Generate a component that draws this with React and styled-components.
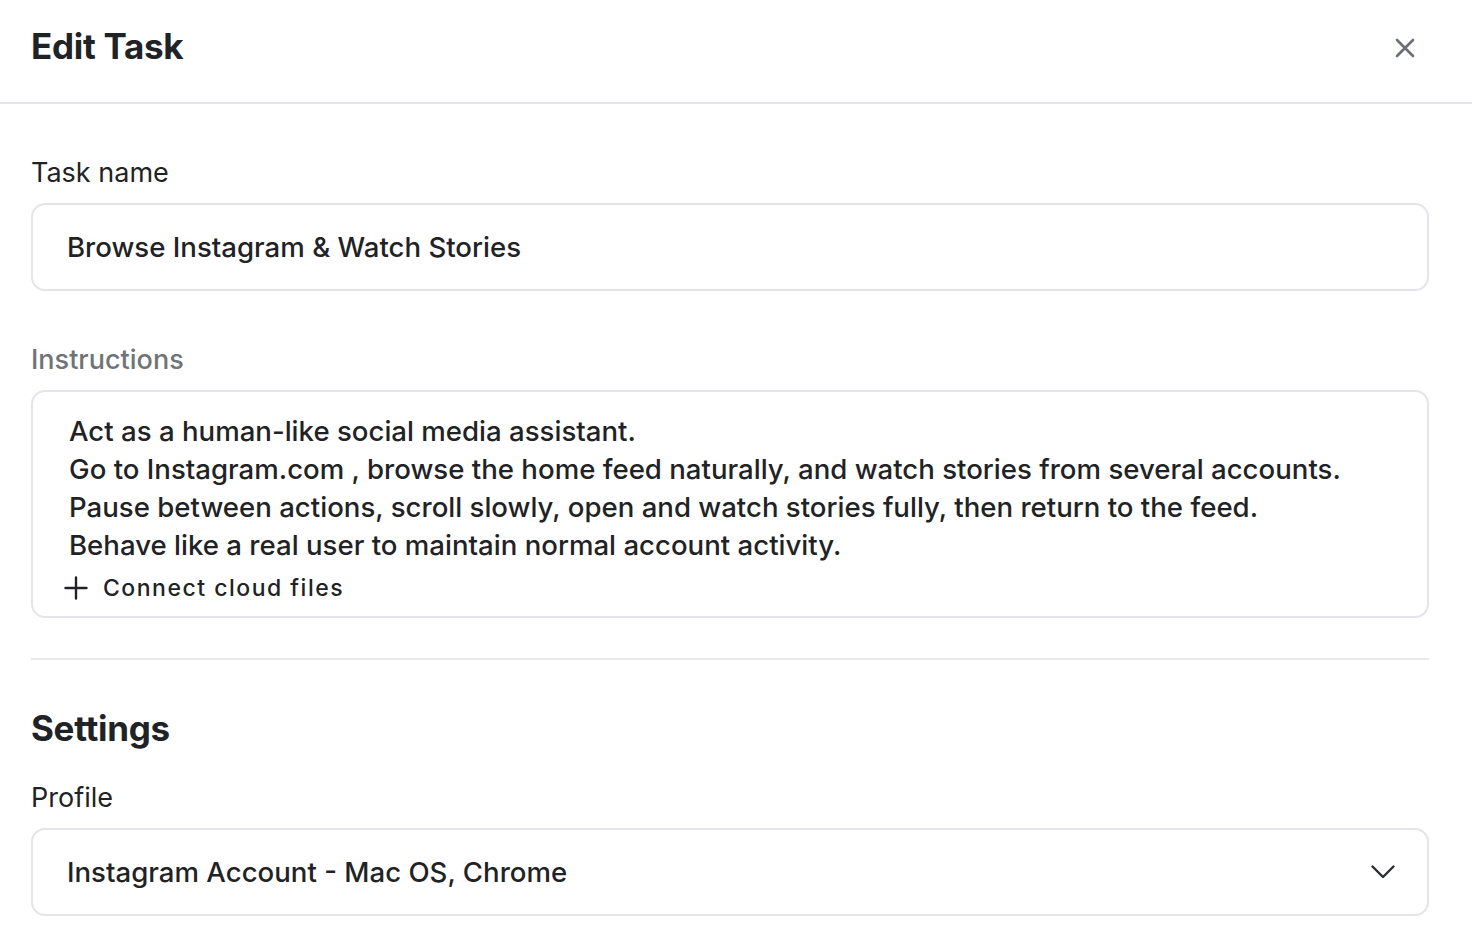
import React from "react";
import styled, { createGlobalStyle } from "styled-components";

const GlobalStyle = createGlobalStyle`
  html, body {
    margin: 0;
    padding: 0;
    background: #ffffff;
    font-family: Inter, "Noto Sans", "Liberation Sans", sans-serif;
    color: #1f2326;
  }
  * { box-sizing: border-box; }
`;

const Header = styled.div`
  height: 104px;
  border-bottom: 2px solid #e4e4ea;
  display: flex;
  align-items: center;
  justify-content: space-between;
  padding: 0 56px 10px 31px;
`;

const Title = styled.h1`
  margin: 0;
  font-size: 35px;
  font-weight: 700;
  letter-spacing: -0.3px;
  color: #1f2326;
`;

const CloseButton = styled.button`
  border: none;
  background: none;
  padding: 0;
  width: 22px;
  height: 22px;
  display: flex;
  align-items: center;
  justify-content: center;
  color: #6b6f75;
  cursor: pointer;
  margin-top: 4px;
`;

const Body = styled.div`
  padding: 53px 43px 0 31px;
`;

const Field = styled.div`
  display: flex;
  flex-direction: column;
  gap: 14px;
  margin-bottom: ${(p) => p.$mb || 0}px;
`;

const Label = styled.label`
  font-size: 27px;
  font-weight: ${(p) => (p.$muted ? 500 : 400)};
  color: ${(p) => (p.$muted ? "#6f7479" : "#1f2326")};
  line-height: 32px;
`;

const Box = styled.div`
  border: 2px solid #e4e4ea;
  border-radius: 14px;
  background: #fff;
`;

const InputBox = styled(Box)`
  height: 88px;
  display: flex;
  align-items: center;
  justify-content: space-between;
  padding: 0 32px 0 34px;
  font-size: 27.6px;
  font-weight: 500;
  color: #1f2326;
`;

const TextArea = styled(Box)`
  padding: 20px 30px 14px 36px;
  font-size: 27.6px;
  font-weight: 500;
  line-height: 38px;
`;

const Line = styled.div`
  white-space: nowrap;
`;

const ConnectButton = styled.button`
  border: none;
  background: none;
  padding: 0;
  margin: 10px 0 0 -5px;
  display: flex;
  align-items: center;
  gap: 15px;
  font-family: inherit;
  font-size: 23px;
  font-weight: 500;
  letter-spacing: 1.5px;
  color: #1f2326;
  cursor: pointer;
`;

const Divider = styled.hr`
  border: none;
  border-top: 2px solid #e9e9ee;
  margin: 40px 0 48px;
`;

const SectionTitle = styled.h2`
  margin: 0 0 34px;
  font-size: 35px;
  font-weight: 700;
  letter-spacing: -0.3px;
  color: #1f2326;
  line-height: 40px;
`;

const CloseIcon = () => (
  <svg width="20" height="20" viewBox="0 0 20 20" fill="none">
    <path d="M2 2L18 18M18 2L2 18" stroke="currentColor" strokeWidth="2.6" strokeLinecap="round" />
  </svg>
);

const PlusIcon = () => (
  <svg width="24" height="24" viewBox="0 0 24 24" fill="none">
    <path d="M12 1.5V22.5M1.5 12H22.5" stroke="#1f2326" strokeWidth="2.4" strokeLinecap="round" />
  </svg>
);

const ChevronIcon = () => (
  <svg width="24" height="14" viewBox="0 0 24 14" fill="none">
    <path d="M1.5 1.5L12 12L22.5 1.5" stroke="#2a2d31" strokeWidth="2.4" strokeLinecap="round" strokeLinejoin="round" />
  </svg>
);

const instructions = [
  "Act as a human-like social media assistant.",
  "Go to Instagram.com , browse the home feed naturally, and watch stories from several accounts.",
  "Pause between actions, scroll slowly, open and watch stories fully, then return to the feed.",
  "Behave like a real user to maintain normal account activity.",
];

export default function App() {
  return (
    <>
      <GlobalStyle />
      <Header>
        <Title>Edit Task</Title>
        <CloseButton aria-label="Close">
          <CloseIcon />
        </CloseButton>
      </Header>
      <Body>
        <Field $mb={53}>
          <Label>Task name</Label>
          <InputBox>Browse Instagram &amp; Watch Stories</InputBox>
        </Field>
        <Field>
          <Label $muted>Instructions</Label>
          <TextArea>
            {instructions.map((l) => (
              <Line key={l}>{l}</Line>
            ))}
            <ConnectButton>
              <PlusIcon />
              Connect cloud files
            </ConnectButton>
          </TextArea>
        </Field>
        <Divider />
        <SectionTitle>Settings</SectionTitle>
        <Field>
          <Label>Profile</Label>
          <InputBox>
            Instagram Account - Mac OS, Chrome
            <ChevronIcon />
          </InputBox>
        </Field>
      </Body>
    </>
  );
}
